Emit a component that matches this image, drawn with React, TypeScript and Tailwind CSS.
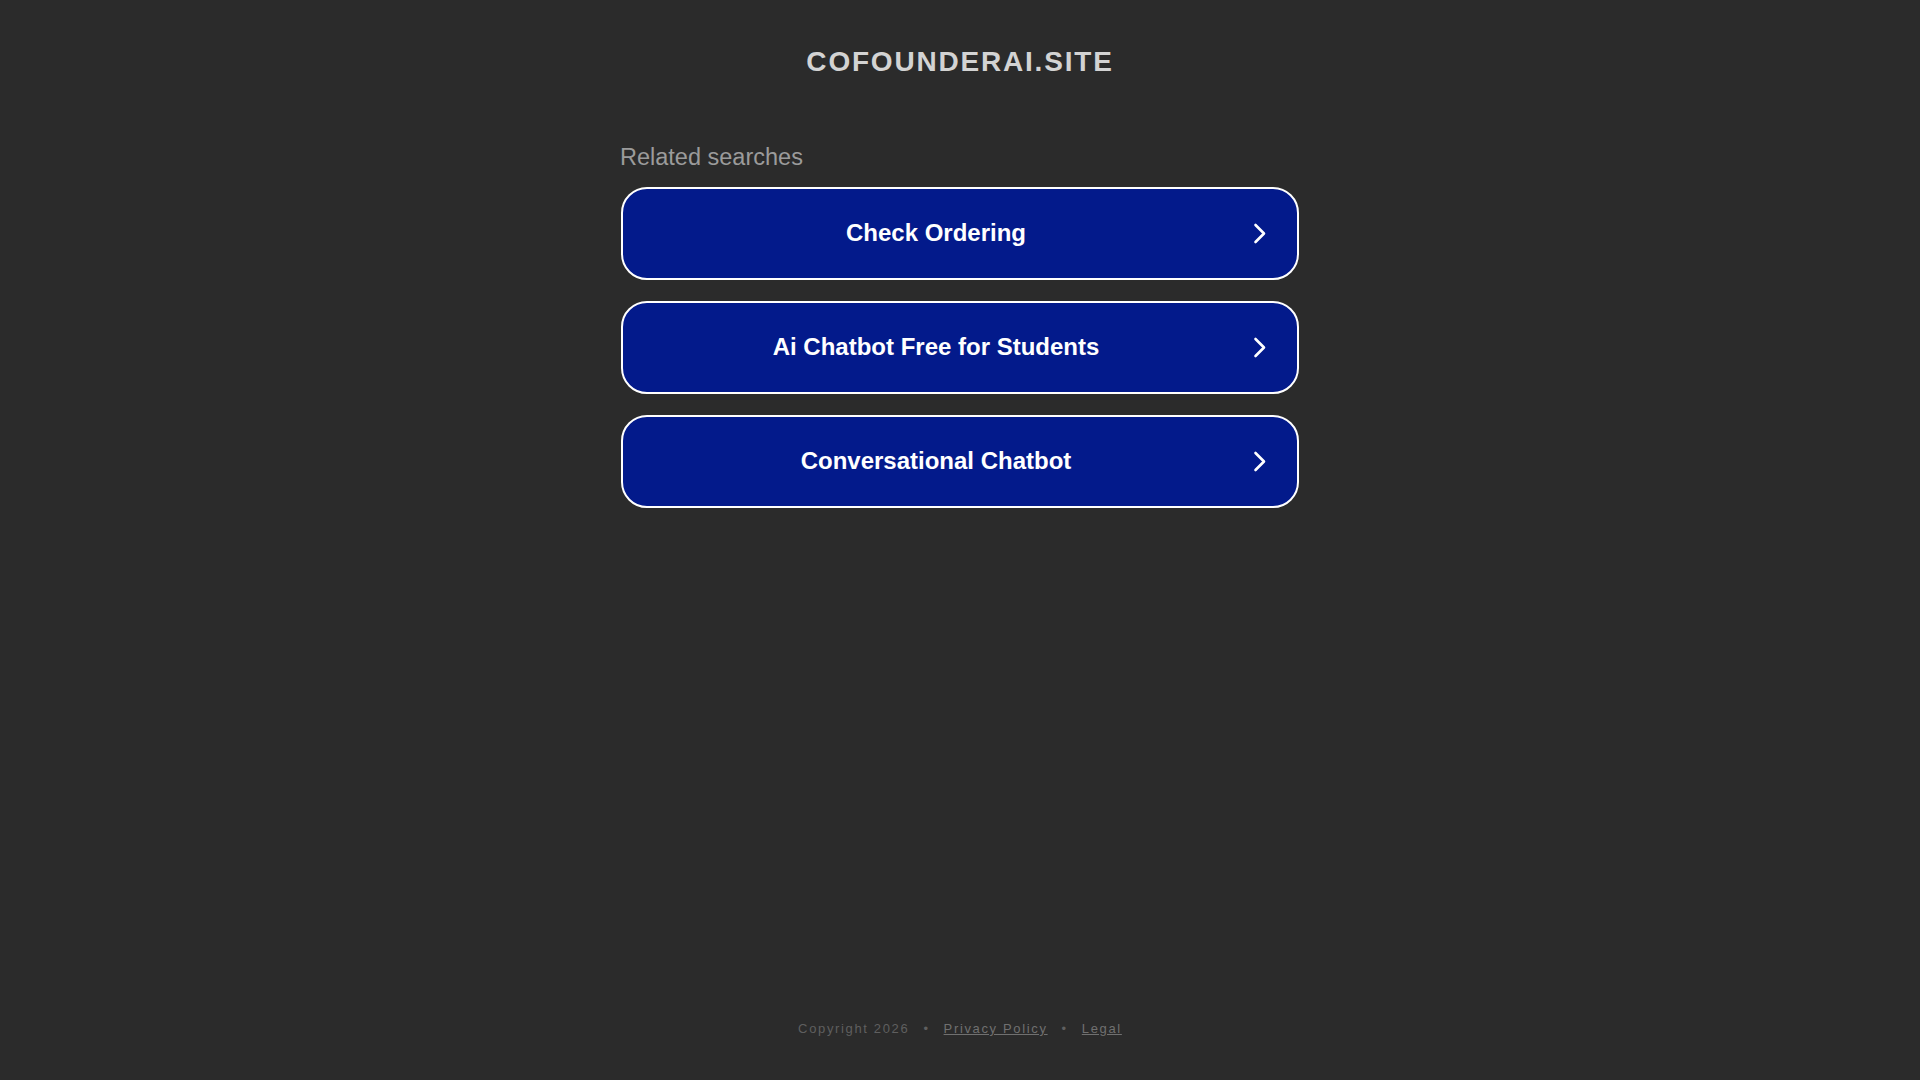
const searches = [
  "Check Ordering",
  "Ai Chatbot Free for Students",
  "Conversational Chatbot",
];

const Chevron = () => (
  <svg width="14" height="21" viewBox="0 0 14 21" fill="none">
    <path
      d="M2.5 2 L11 10.5 L2.5 19"
      stroke="#ffffff"
      strokeWidth="2.6"
      strokeLinecap="round"
      strokeLinejoin="round"
    />
  </svg>
);

const App = () => {
  return (
    <div
      className="min-h-screen flex flex-col items-center bg-[#2b2b2b]"
      style={{ fontFamily: '"Liberation Sans", Arial, sans-serif' }}
    >
      {/* Header */}
      <h1 className="mt-[48px] text-[28px] leading-[28px] font-bold tracking-[1.8px] text-[#d3d3d3]">
        COFOUNDERAI.SITE
      </h1>

      {/* Related searches */}
      <div className="mt-[70px] w-[678px]">
        <h2 className="-ml-px text-[23.5px] leading-[23.5px] text-[#9b9b9b]">
          Related searches
        </h2>

        <div className="mt-[17px] flex flex-col gap-[21px]">
          {searches.map((label) => (
            <a
              key={label}
              href="#"
              className="flex items-center h-[93px] px-[13px] rounded-[26px] border-2 border-white bg-[#031a8b]"
            >
              <span className="flex-1 text-center text-[24px] font-bold text-white">
                {label}
              </span>
              <span className="w-12 flex items-center justify-center">
                <Chevron />
              </span>
            </a>
          ))}
        </div>
      </div>

      {/* Footer */}
      <footer className="mt-auto pb-[45px] flex items-center text-[13px] leading-[13px] tracking-[1.65px] text-[#5f5f5f]">
        <span>Copyright 2026</span>
        <span className="mx-[14px]">•</span>
        <a href="#" className="underline text-[#707070]">
          Privacy Policy
        </a>
        <span className="mx-[14px]">•</span>
        <a href="#" className="underline text-[#707070]">
          Legal
        </a>
      </footer>
    </div>
  );
};

export default App;
